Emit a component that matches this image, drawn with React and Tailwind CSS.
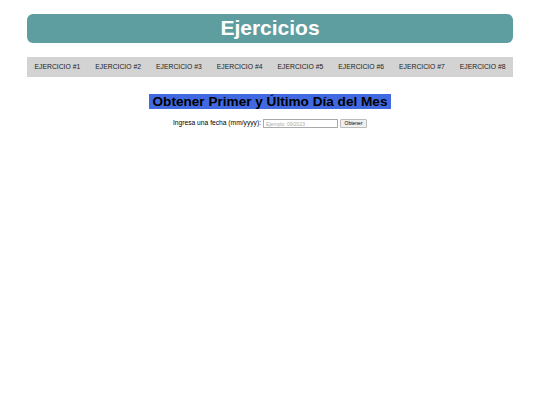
export default function App() {
  const items = [1, 2, 3, 4, 5, 6, 7, 8];
  return (
    <div className="min-h-[405px] w-[540px] bg-white" style={{ fontFamily: '"Liberation Sans", Arial, sans-serif' }}>
      <div className="px-[27px] pt-[14px]">
        <div className="flex h-[29px] items-center justify-center rounded-[6px] bg-[#5f9ea0] pb-[3px]">
          <h1 className="text-[21px] font-bold leading-none text-white">Ejercicios</h1>
        </div>
        <nav className="mt-[14px] flex h-[20px] items-center bg-[#d3d3d3]">
          {items.map((n) => (
            <div key={n} className="flex-1 text-center text-[6.8px] leading-none text-[#222]">
              EJERCICIO #{n}
            </div>
          ))}
        </nav>
        <div className="mt-[17px] flex justify-center">
          <h2 className="bg-[#4169e1] px-[3.5px] text-[13.6px] font-bold leading-[15px] text-black">
            Obtener Primer y Último Día del Mes
          </h2>
        </div>
        <div className="mt-[10px] flex items-center justify-center gap-[2px]">
          <label className="text-[6.7px] leading-none text-black">Ingresa una fecha (mm/yyyy):</label>
          <input
            type="text"
            placeholder="Ejemplo: 09/2023"
            className="h-[9px] w-[75px] border-[0.5px] border-[#aaa] bg-white px-[2px] text-[5px] leading-none outline-none placeholder:text-[#aaa]"
          />
          <button className="h-[9px] w-[27px] rounded-[1px] border-[0.5px] border-[#bbb] bg-[#efefef] text-[5px] leading-none text-black">
            Obtener
          </button>
        </div>
      </div>
    </div>
  );
}
